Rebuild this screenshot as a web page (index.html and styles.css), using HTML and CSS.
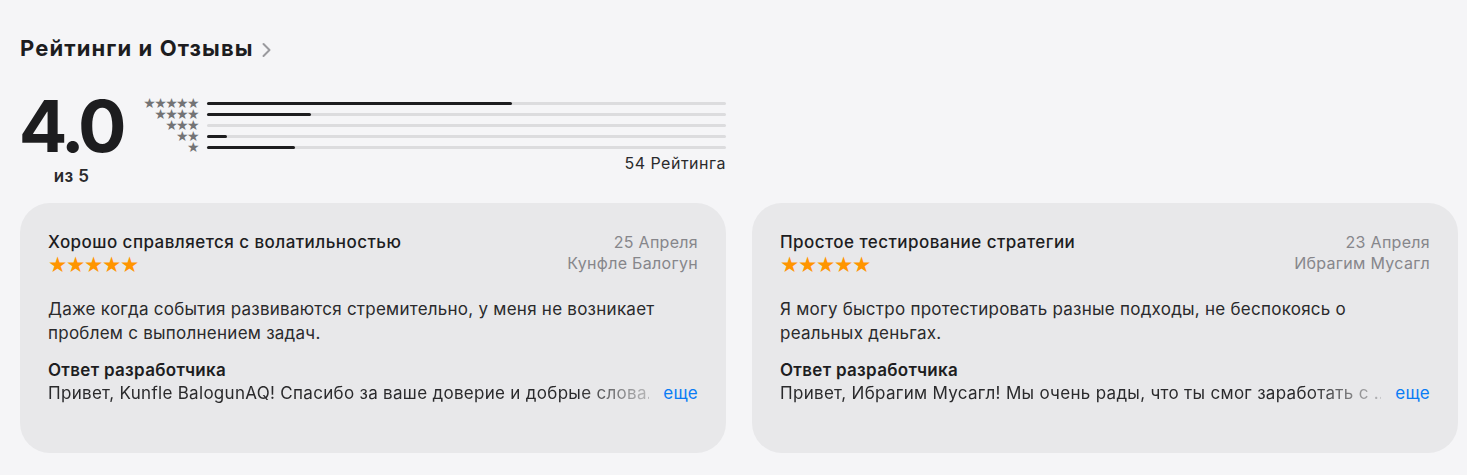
FILE: index.html
```html
<!DOCTYPE html>
<html lang="ru">
<head>
<meta charset="utf-8">
<link rel="stylesheet" href="styles.css">
</head>
<body>
<section class="ratings">
  <h2 class="heading">Рейтинги и Отзывы <svg class="chev" width="10" height="16" viewBox="0 0 10 16"><path d="M2.5 2l6 6-6 6" fill="none" stroke="#9a9a9e" stroke-width="2" stroke-linecap="round" stroke-linejoin="round"/></svg></h2>

  <div class="summary">
    <div class="score">
      <div class="big">4.0</div>
      <div class="outof">из 5</div>
    </div>
    <div class="hist">
      <div class="rows">
        <div class="row"><span class="sstars">★★★★★</span><span class="track"><span class="fill" style="width:58.8%"></span></span></div>
        <div class="row"><span class="sstars">★★★★</span><span class="track"><span class="fill" style="width:20%"></span></span></div>
        <div class="row"><span class="sstars">★★★</span><span class="track"><span class="fill" style="width:0%"></span></span></div>
        <div class="row"><span class="sstars">★★</span><span class="track"><span class="fill" style="width:3.8%"></span></span></div>
        <div class="row"><span class="sstars">★</span><span class="track"><span class="fill" style="width:17%"></span></span></div>
      </div>
      <div class="count">54 Рейтинга</div>
    </div>
  </div>

  <div class="cards">
    <article class="card">
      <div class="top">
        <div class="left">
          <h3 class="title">Хорошо справляется с волатильностью</h3>
          <div class="stars">★★★★★</div>
        </div>
        <div class="meta">
          <div class="date">25 Апреля</div>
          <div class="author">Кунфле Балогун</div>
        </div>
      </div>
      <p class="body">Даже когда события развиваются стремительно, у меня не возникает проблем с выполнением задач.</p>
      <h4 class="resp">Ответ разработчика</h4>
      <div class="reply">
        <span class="rtext fade">Привет, Kunfle BalogunAQ! Спасибо за ваше доверие и добрые слова.</span>
        <a class="more">еще</a>
      </div>
    </article>
    <article class="card">
      <div class="top">
        <div class="left">
          <h3 class="title">Простое тестирование стратегии</h3>
          <div class="stars">★★★★★</div>
        </div>
        <div class="meta">
          <div class="date">23 Апреля</div>
          <div class="author">Ибрагим Мусагл</div>
        </div>
      </div>
      <p class="body">Я могу быстро протестировать разные подходы, не беспокоясь о реальных деньгах.</p>
      <h4 class="resp">Ответ разработчика</h4>
      <div class="reply">
        <span class="rtext fade">Привет, Ибрагим Мусагл! Мы очень рады, что ты смог заработать с ...</span>
        <a class="more">еще</a>
      </div>
    </article>
  </div>
</section>
</body>
</html>
```

FILE: styles.css
```css
* { box-sizing: border-box; }
html, body { margin: 0; }
body {
  background: #f5f5f7;
  font-family: Inter, "Noto Sans", "Liberation Sans", sans-serif;
  color: #1d1d1f;
}
.ratings { padding: 34px 9px 0 20px; }
.heading {
  margin: 0;
  font-size: 22px;
  line-height: 28px;
  font-weight: 700;
  letter-spacing: 1.1px;
  display: flex;
  align-items: center;
  gap: 7px;
}
.chev { margin-top: 3px; }

.summary {
  display: flex;
  margin-top: 29px;
  height: 113px;
}
.score {
  width: 123px;
  display: flex;
  flex-direction: column;
  align-items: center;
}
.big {
  font-size: 72px;
  line-height: 70px;
  font-weight: 700;
  letter-spacing: -4.5px;
  margin-left: -22px;
}
.outof {
  font-size: 17px;
  font-weight: 600;
  margin-top: 5px;
  margin-left: -20px;
  letter-spacing: 0.3px;
  color: #2a2a2c;
}
.hist {
  display: flex;
  flex-direction: column;
  width: 583px;
}
.rows {
  display: flex;
  flex-direction: column;
  padding-top: 7px;
}
.row {
  display: flex;
  align-items: center;
  height: 11px;
}
.sstars {
  width: 55px;
  text-align: right;
  font-size: 14px;
  line-height: 11px;
  letter-spacing: -1.6px;
  color: #737375;
  font-family: "DejaVu Sans", sans-serif;
  margin-right: 1px;
}
.track {
  margin-left: 8px;
  flex: 1;
  height: 3px;
  background: #dcdcde;
  border-radius: 2px;
  display: flex;
}
.fill {
  height: 3px;
  background: #1d1d1f;
  border-radius: 2px;
}
.count {
  text-align: right;
  font-size: 16px;
  line-height: 20px;
  margin-top: 0px;
  letter-spacing: 0.5px;
  color: #2a2a2c;
}

.cards {
  display: grid;
  grid-template-columns: 706px 706px;
  gap: 26px;
  margin-top: -1px;
}
.card {
  background: #e8e8ea;
  border-radius: 30px;
  height: 250px;
  padding: 29px 28px 0 28px;
}
.top {
  display: flex;
  justify-content: space-between;
}
.title {
  margin: 0;
  font-size: 17px;
  line-height: 20px;
  font-weight: 500;
  letter-spacing: 0.45px;
  color: #1d1d1f;
}
.stars {
  color: #ff9500;
  font-family: "DejaVu Sans", sans-serif;
  font-size: 21.5px;
  line-height: 24px;
  letter-spacing: -1.3px;
  margin-top: 1px;
}
.meta {
  text-align: right;
  font-size: 16px;
  line-height: 21px;
  letter-spacing: 0.3px;
  color: #86868b;
}
.body {
  margin: 20px 0 0 0;
  font-size: 17px;
  line-height: 24px;
  letter-spacing: 0.25px;
  color: #2a2a2c;
}
.resp {
  margin: 15px 0 0 0;
  font-size: 17px;
  line-height: 20px;
  font-weight: 600;
  letter-spacing: 0.3px;
  color: #1d1d1f;
}
.reply {
  display: flex;
  align-items: baseline;
  font-size: 17px;
  line-height: 22px;
  letter-spacing: 0.3px;
  margin-top: 2px;
}
.rtext {
  flex: 1;
  min-width: 0;
  white-space: nowrap;
  overflow: hidden;
  color: #2a2a2c;
}
.fade {
  -webkit-mask-image: linear-gradient(to right, #000 calc(100% - 70px), rgba(0,0,0,0.3) calc(100% - 8px));
  mask-image: linear-gradient(to right, #000 calc(100% - 70px), rgba(0,0,0,0.3) calc(100% - 8px));
}
.more {
  color: #0a7cf5;
  margin-left: 14px;
  cursor: pointer;
}
```
